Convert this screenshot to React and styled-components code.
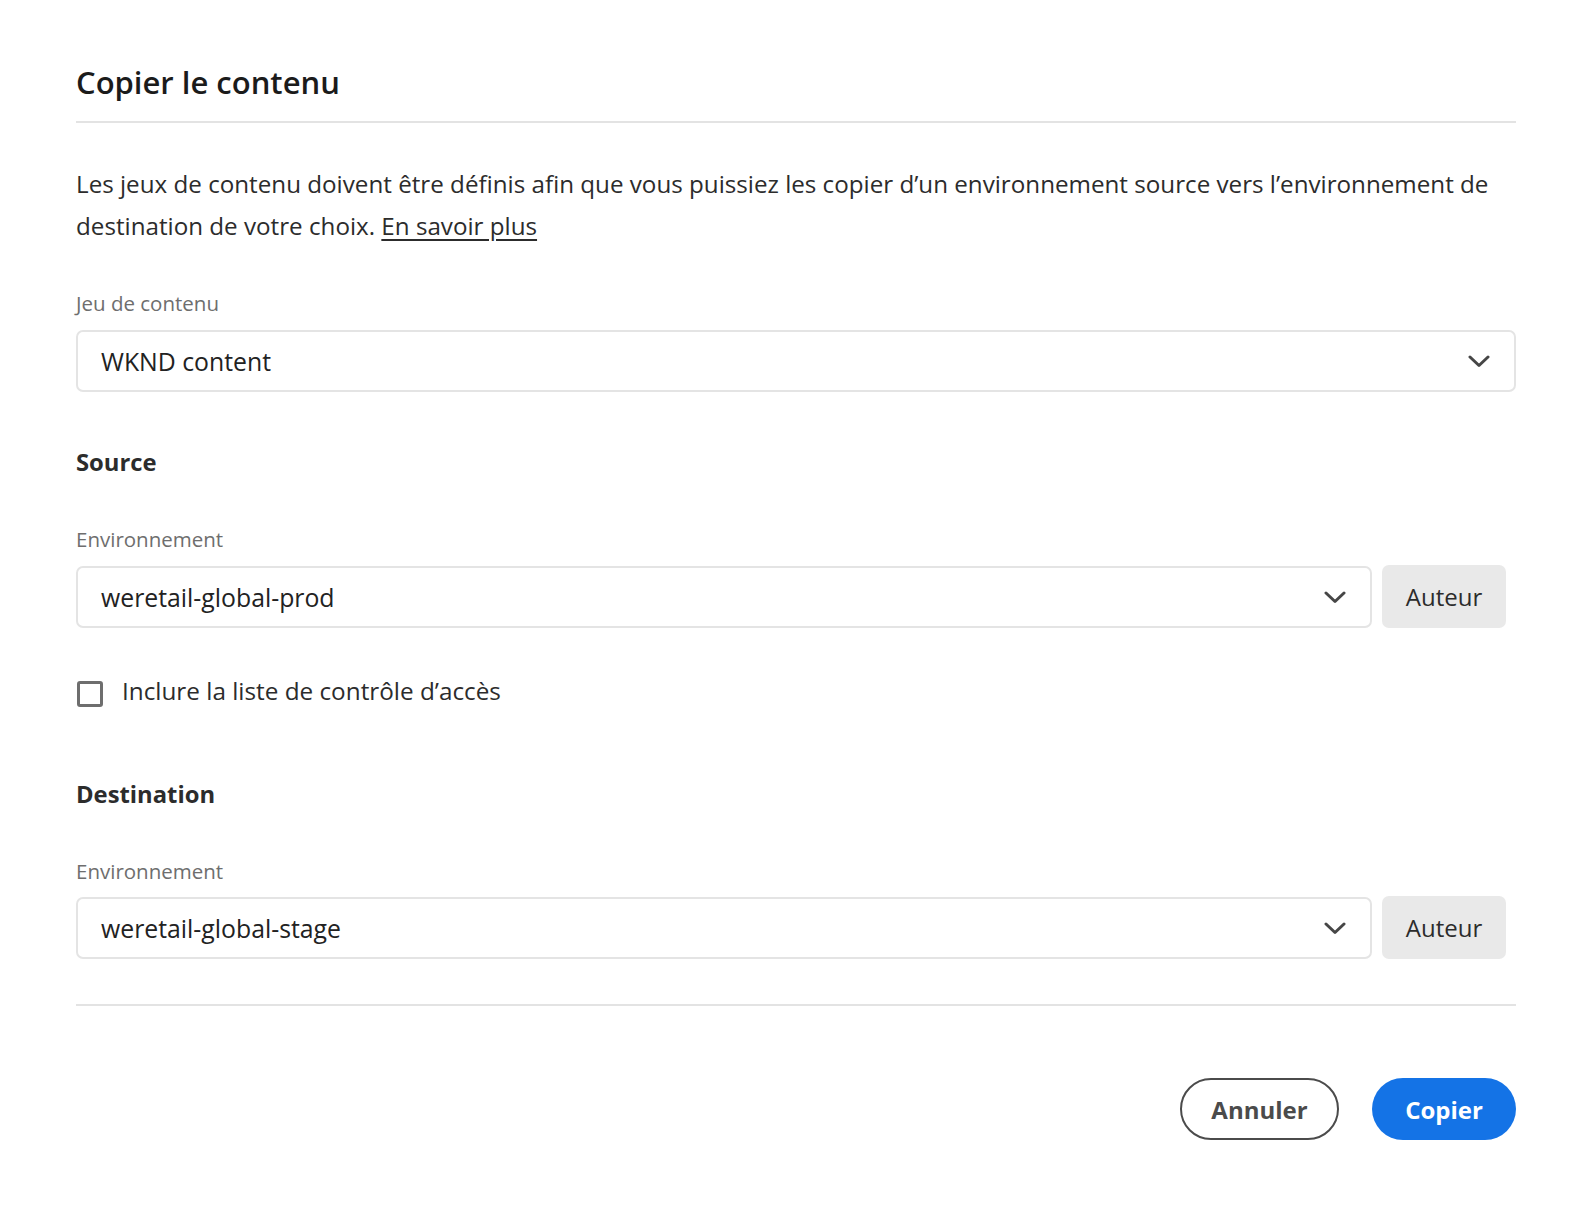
import React from "react";
import styled, { createGlobalStyle } from "styled-components";

const Global = createGlobalStyle`
  html, body { margin: 0; padding: 0; background: #ffffff; }
  body { font-family: "Open Sans", "Noto Sans", sans-serif; color: #2c2c2c; }
  * { box-sizing: border-box; }
`;

const Dialog = styled.div`
  width: 1594px;
  padding: 63px 78px 0 76px;
  display: flex;
  flex-direction: column;
`;

const Title = styled.h1`
  margin: 0;
  font-size: 31px;
  line-height: 38px;
  font-weight: 600;
  color: #1b1b1b;
`;

const Divider = styled.hr`
  margin: ${(p) => p.$top}px 0 0;
  border: none;
  height: 2px;
  background: #e3e3e3;
`;

const Paragraph = styled.p`
  margin: 40px 0 0;
  font-size: 24.2px;
  line-height: 42px;
  color: #2c2c2c;
`;

const Link = styled.a`
  color: #2c2c2c;
  text-decoration: underline;
  text-underline-offset: 4px;
`;

const Label = styled.div`
  margin-top: ${(p) => p.$top}px;
  font-size: 20.5px;
  line-height: 24px;
  color: #6e6e6e;
`;

const Heading = styled.h2`
  margin: ${(p) => p.$top}px 0 0;
  font-size: 23.8px;
  line-height: 30px;
  font-weight: 700;
  color: #2c2c2c;
`;

const FieldRow = styled.div`
  margin-top: ${(p) => p.$top}px;
  display: flex;
  align-items: center;
  gap: 10px;
`;

const Select = styled.div`
  flex: 1;
  height: 62px;
  border: 2px solid #e4e4e4;
  border-radius: 7px;
  padding: 0 24px 0 23px;
  display: flex;
  align-items: center;
  justify-content: space-between;
  font-size: 24.8px;
  color: #222222;
`;

const AuthorButton = styled.button`
  width: 124px;
  height: 63px;
  border: none;
  border-radius: 7px;
  background: #e9e9e9;
  font-family: inherit;
  font-size: 24px;
  color: #2c2c2c;
  margin: -2px 10px 0 0;
`;

const CheckRow = styled.label`
  margin-top: 49px;
  height: 30px;
  display: flex;
  align-items: center;
  gap: 19px;
  font-size: 24.3px;
  color: #2c2c2c;
`;

const CheckText = styled.span`
  margin-top: -3px;
`;

const Box = styled.span`
  width: 26px;
  height: 26px;
  margin-left: 1px;
  margin-top: 3px;
  border: 3px solid #6e6e6e;
  border-radius: 3px;
  flex-shrink: 0;
`;

const Footer = styled.div`
  margin-top: 72px;
  display: flex;
  justify-content: flex-end;
  gap: 33px;
`;

const PillButton = styled.button`
  height: 62px;
  width: ${(p) => p.$w}px;
  border-radius: 31px;
  font-family: inherit;
  font-size: 24px;
  font-weight: 700;
  border: ${(p) => (p.$primary ? "none" : "2px solid #4b4b4b")};
  background: ${(p) => (p.$primary ? "#1473e6" : "#ffffff")};
  color: ${(p) => (p.$primary ? "#ffffff" : "#4b4b4b")};
`;

const Chevron = () => (
  <svg width="22" height="13" viewBox="0 0 22 13" fill="none">
    <path d="M2 2 L11 10.5 L20 2" stroke="#464646" strokeWidth="3" strokeLinecap="round" strokeLinejoin="round" />
  </svg>
);

export default function App() {
  return (
    <>
      <Global />
      <Dialog>
        <Title>Copier le contenu</Title>
        <Divider $top={20} />
        <Paragraph>
          Les jeux de contenu doivent être définis afin que vous puissiez les copier d’un environnement source vers l’environnement de
          <br />
          destination de votre choix. <Link href="#">En savoir plus</Link>
        </Paragraph>

        <Label $top={44}>Jeu de contenu</Label>
        <FieldRow $top={15}>
          <Select>
            <span>WKND content</span>
            <Chevron />
          </Select>
        </FieldRow>

        <Heading $top={55}>Source</Heading>
        <Label $top={50}>Environnement</Label>
        <FieldRow $top={15}>
          <Select>
            <span>weretail-global-prod</span>
            <Chevron />
          </Select>
          <AuthorButton>Auteur</AuthorButton>
        </FieldRow>

        <CheckRow>
          <Box />
          <CheckText>Inclure la liste de contrôle d’accès</CheckText>
        </CheckRow>

        <Heading $top={72}>Destination</Heading>
        <Label $top={50}>Environnement</Label>
        <FieldRow $top={14}>
          <Select>
            <span>weretail-global-stage</span>
            <Chevron />
          </Select>
          <AuthorButton>Auteur</AuthorButton>
        </FieldRow>

        <Divider $top={45} />

        <Footer>
          <PillButton $w={159}>Annuler</PillButton>
          <PillButton $w={144} $primary>Copier</PillButton>
        </Footer>
      </Dialog>
    </>
  );
}
